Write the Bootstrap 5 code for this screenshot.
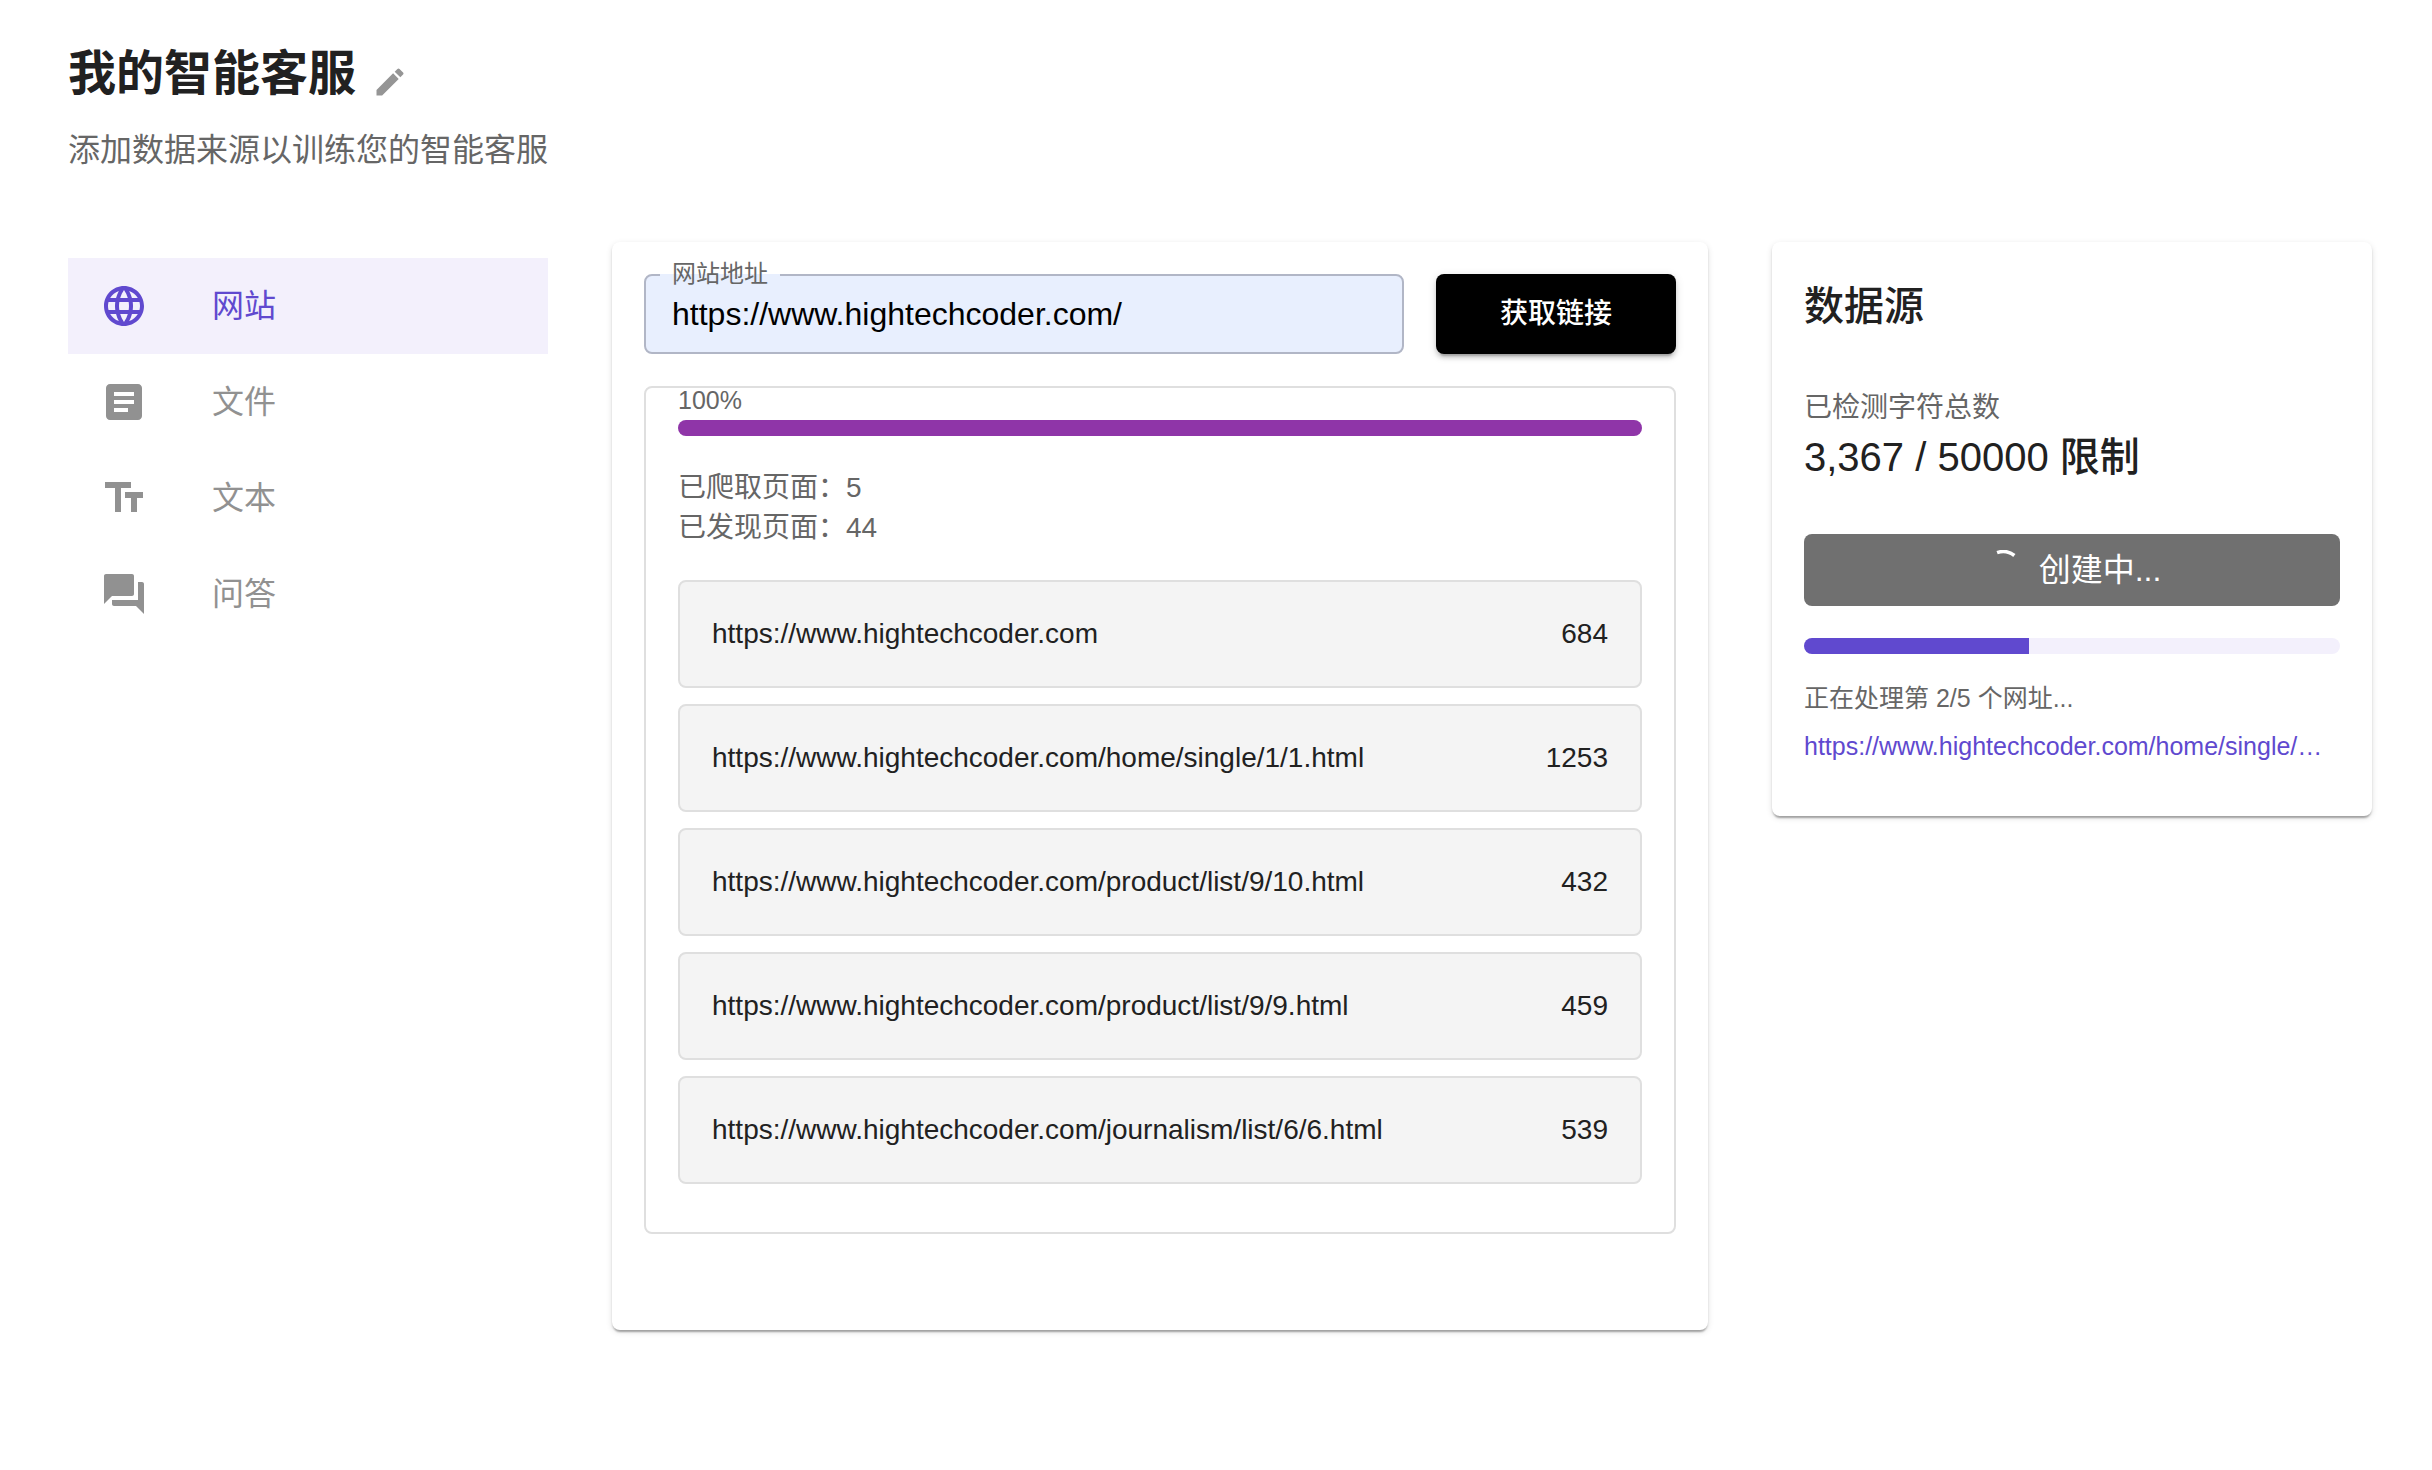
<!DOCTYPE html>
<html lang="zh-CN">
<head>
<meta charset="utf-8">
<meta name="viewport" content="width=device-width, initial-scale=1">
<title>我的智能客服</title>
<link href="https://cdn.jsdelivr.net/npm/bootstrap@5.3.0/dist/css/bootstrap.min.css" rel="stylesheet">
<style>
  :root {
    --brand: #6049cf;
    --brand-soft: #f3f0fc;
    --ink: #212121;
    --muted: #666;
    --line: #dfdfdf;
    --field: #e8effe;
  }
  body {
    font-family: "Liberation Sans", "Noto Sans CJK SC", sans-serif;
    color: var(--ink);
    background: #fff;
    font-size: 28px;
    line-height: 40px;
  }
  .page { padding: 42px 28px 120px 36px; }
  .page-head { padding: 0 32px; margin-bottom: 68px; }
  .page-title { font-size: 48px; line-height: 64px; font-weight: 700; margin: 0; }
  .edit-btn { border: 0; background: none; padding: 0; color: #959595; line-height: 0; }
  .edit-btn svg { width: 36px; height: 36px; }
  .page-sub { font-size: 32px; line-height: 48px; color: var(--muted); margin: 20px 0 0; }
  .text-soft { color: var(--muted); }

  .board { --bs-gutter-x: 64px; margin: 0; }
  @media (min-width: 1800px) {
    .board-nav { width: 544px; }
    .board-main { width: auto; flex: 1 1 0; }
    .board-side { width: 664px; }
  }

  .source-nav { padding-top: 16px; }
  .source-nav .nav-link {
    height: 96px; padding: 0 32px; gap: 64px;
    font-size: 32px; color: #919191; border-radius: 0;
  }
  .source-nav .nav-link svg { width: 48px; height: 48px; }
  .source-nav .nav-link.active { background: var(--brand-soft); color: var(--brand); }

  .panel {
    border: 0; border-radius: 8px; color: inherit;
    box-shadow: 0 4px 2px -2px rgba(0,0,0,.2), 0 2px 2px rgba(0,0,0,.14), 0 2px 6px rgba(0,0,0,.12);
  }
  .panel-main { padding: 32px 32px 96px; gap: 32px; }
  .panel-side { padding: 38px 32px 50px; }

  .fetch-form { gap: 32px; }
  .url-label {
    position: absolute; left: 16px; top: -12px;
    padding: 0 12px; font-size: 24px; line-height: 24px; color: var(--muted);
    background: linear-gradient(var(--field), var(--field)) 0 12px / 100% 2px no-repeat;
  }
  .url-input, .url-input:focus {
    height: 80px; padding: 0 26px; font-size: 32px; color: #000;
    border: 2px solid #b1b6c6; border-radius: 8px; background: var(--field);
  }
  .fetch-btn, .fetch-btn:hover {
    width: 240px; height: 80px; border: 0; border-radius: 8px; padding: 0;
    font-size: 28px; font-weight: 500; background: #000; color: #fff;
    box-shadow: 0 6px 2px -4px rgba(0,0,0,.2), 0 4px 4px rgba(0,0,0,.14), 0 2px 10px rgba(0,0,0,.12);
  }

  .crawl-box { border: 2px solid var(--line); border-radius: 8px; padding: 0 32px 48px; }
  .crawl-percent { font-size: 25px; line-height: 24px; margin-bottom: 8px; }
  .bar { height: 16px; border-radius: 8px; background: var(--brand-soft); }
  .bar-crawl .progress-bar { background: #8f35a8; }
  .bar-train { margin: 32px 0 24px; }
  .bar-train .progress-bar { background: var(--brand); }
  .crawl-stats { margin: 32px 0; }

  .page-list { gap: 16px; }
  .page-list .list-group-item {
    height: 108px; padding: 0 32px; border: 2px solid var(--line); border-radius: 8px;
    background: #f4f4f4; color: var(--ink);
  }

  .side-title { font-size: 40px; line-height: 52px; font-weight: 500; margin: 0 0 56px; }
  .side-total { font-size: 40px; line-height: 58px; font-weight: 500; margin: 0 0 48px; }
  .create-btn, .create-btn:disabled {
    height: 72px; border: 0; border-radius: 8px; padding: 0; gap: 16px;
    font-size: 32px; background: #707070; color: #fff; opacity: 1;
  }
  .create-btn svg { width: 40px; height: 40px; }
  .side-note { font-size: 25px; line-height: 40px; }
  .side-link { color: var(--brand); }
</style>
</head>
<body>
<div class="page container-fluid">
  <header class="page-head">
    <div class="d-flex align-items-center gap-3">
      <h1 class="page-title">我的智能客服</h1>
      <button type="button" class="edit-btn mt-3" aria-label="编辑名称">
        <svg viewBox="0 0 24 24" fill="currentColor"><path d="M3 17.25V21h3.75L17.81 9.94l-3.75-3.75L3 17.25zM20.71 7.04c.39-.39.39-1.02 0-1.41l-2.34-2.34a.9959.9959 0 0 0-1.41 0l-1.83 1.83 3.75 3.75 1.83-1.83z"/></svg>
      </button>
    </div>
    <p class="page-sub">添加数据来源以训练您的智能客服</p>
  </header>

  <div class="row board align-items-start">
    <div class="col-12 board-nav">
      <nav class="nav flex-column source-nav">
        <a class="nav-link active d-flex align-items-center" href="#" aria-current="page">
          <svg viewBox="0 0 24 24" fill="currentColor"><path d="M11.99 2C6.47 2 2 6.48 2 12s4.47 10 9.99 10C17.52 22 22 17.52 22 12S17.52 2 11.99 2zm6.93 6h-2.95c-.32-1.25-.78-2.45-1.38-3.56 1.84.63 3.37 1.91 4.33 3.56zM12 4.04c.83 1.2 1.48 2.53 1.91 3.96h-3.82c.43-1.43 1.08-2.76 1.91-3.96zM4.26 14C4.1 13.36 4 12.69 4 12s.1-1.36.26-2h3.38c-.08.66-.14 1.32-.14 2s.06 1.34.14 2H4.26zm.82 2h2.95c.32 1.25.78 2.45 1.38 3.56-1.84-.63-3.37-1.9-4.33-3.56zm2.95-8H5.08c.96-1.66 2.49-2.93 4.33-3.56C8.81 5.55 8.35 6.75 8.03 8zM12 19.96c-.83-1.2-1.48-2.53-1.91-3.96h3.82c-.43 1.43-1.08 2.76-1.91 3.96zM14.34 14H9.66c-.09-.66-.16-1.32-.16-2s.07-1.35.16-2h4.68c.09.65.16 1.32.16 2s-.07 1.34-.16 2zm.25 5.56c.6-1.11 1.06-2.31 1.38-3.56h2.95c-.96 1.65-2.49 2.93-4.33 3.56zM16.36 14c.08-.66.14-1.32.14-2s-.06-1.34-.14-2h3.38c.16.64.26 1.31.26 2s-.1 1.36-.26 2h-3.38z"/></svg>
          <span>网站</span>
        </a>
        <a class="nav-link d-flex align-items-center" href="#">
          <svg viewBox="0 0 24 24" fill="currentColor"><path d="M19 3H5c-1.1 0-2 .9-2 2v14c0 1.1.9 2 2 2h14c1.1 0 2-.9 2-2V5c0-1.1-.9-2-2-2zm-5 14H7v-2h7v2zm3-4H7v-2h10v2zm0-4H7V7h10v2z"/></svg>
          <span>文件</span>
        </a>
        <a class="nav-link d-flex align-items-center" href="#">
          <svg viewBox="0 0 24 24" fill="currentColor"><path d="M2.5 4v3h5v12h3V7h5V4h-13zm19 5h-9v3h3v7h3v-7h3V9z"/></svg>
          <span>文本</span>
        </a>
        <a class="nav-link d-flex align-items-center" href="#">
          <svg viewBox="0 0 24 24" fill="currentColor"><path d="M21 6h-2v9H6v2c0 .55.45 1 1 1h11l4 4V7c0-.55-.45-1-1-1zm-4 6V3c0-.55-.45-1-1-1H3c-.55 0-1 .45-1 1v14l4-4h10c.55 0 1-.45 1-1z"/></svg>
          <span>问答</span>
        </a>
      </nav>
    </div>

    <main class="col-12 board-main">
      <section class="card panel panel-main">
        <form class="d-flex fetch-form">
          <div class="position-relative flex-grow-1">
            <input id="site-url" class="form-control url-input" type="text" value="https://www.hightechcoder.com/">
            <label class="url-label" for="site-url">网站地址</label>
          </div>
          <button type="button" class="btn fetch-btn flex-shrink-0">获取链接</button>
        </form>

        <div class="crawl-box">
          <div class="crawl-percent text-soft">100%</div>
          <div class="progress bar bar-crawl" role="progressbar" aria-label="爬取进度" aria-valuenow="100" aria-valuemin="0" aria-valuemax="100">
            <div class="progress-bar" style="width:100%"></div>
          </div>
          <div class="crawl-stats text-soft">
            <div>已爬取页面：5</div>
            <div>已发现页面：44</div>
          </div>
          <ul class="list-group page-list">
            <li class="list-group-item d-flex align-items-center justify-content-between"><span>https://www.hightechcoder.com</span><span>684</span></li>
            <li class="list-group-item d-flex align-items-center justify-content-between"><span>https://www.hightechcoder.com/home/single/1/1.html</span><span>1253</span></li>
            <li class="list-group-item d-flex align-items-center justify-content-between"><span>https://www.hightechcoder.com/product/list/9/10.html</span><span>432</span></li>
            <li class="list-group-item d-flex align-items-center justify-content-between"><span>https://www.hightechcoder.com/product/list/9/9.html</span><span>459</span></li>
            <li class="list-group-item d-flex align-items-center justify-content-between"><span>https://www.hightechcoder.com/journalism/list/6/6.html</span><span>539</span></li>
          </ul>
        </div>
      </section>
    </main>

    <aside class="col-12 board-side">
      <section class="card panel panel-side">
        <h2 class="side-title">数据源</h2>
        <div class="text-soft">已检测字符总数</div>
        <p class="side-total">3,367 / 50000 限制</p>
        <button type="button" class="btn create-btn d-flex align-items-center justify-content-center" disabled>
          <svg viewBox="0 0 44 44" fill="none" stroke="currentColor" stroke-width="4"><path d="M15.5 2.9A20.2 20.2 0 0 1 34.5 6.1"/></svg>
          <span>创建中...</span>
        </button>
        <div class="progress bar bar-train" role="progressbar" aria-label="处理进度" aria-valuenow="42" aria-valuemin="0" aria-valuemax="100">
          <div class="progress-bar" style="width:42%"></div>
        </div>
        <div class="side-note text-soft mb-2">正在处理第 2/5 个网址...</div>
        <a class="side-note side-link text-decoration-none text-truncate" href="#">https://www.hightechcoder.com/home/single/…</a>
      </section>
    </aside>
  </div>
</div>
<script src="https://cdn.jsdelivr.net/npm/bootstrap@5.3.0/dist/js/bootstrap.bundle.min.js"></script>
</body>
</html>
